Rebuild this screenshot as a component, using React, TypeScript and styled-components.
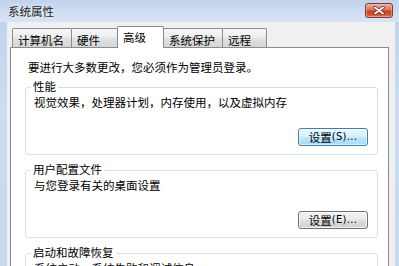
import React from "react";
import styled, { createGlobalStyle } from "styled-components";

const Global = createGlobalStyle`
  html, body { margin: 0; padding: 0; background: #c5d7ed; }
  body { font-family: "Noto Sans CJK SC", "Noto Sans", sans-serif; }
  * { box-sizing: border-box; }
`;

const Window = styled.div`
  width: 399px;
  height: 266px;
  overflow: hidden;
  display: flex;
  flex-direction: column;
  background: linear-gradient(180deg, #bfd3eb 0%, #cddcef 40%, #c8d9ee 100%);
  font-size: 11.5px;
  color: #000;
`;

const TitleBar = styled.div`
  height: 22px;
  flex: none;
  display: flex;
  align-items: center;
  justify-content: space-between;
  padding: 0 6px 0 8px;
  background: linear-gradient(180deg, #c0d3ea 0%, #cfdef1 60%, #d7e4f4 100%);
`;

const Title = styled.div`
  line-height: 14px;
  color: #1a1a1a;
  text-shadow: 0 0 4px rgba(255, 255, 255, 0.9);
`;

const CloseButton = styled.div`
  width: 28px;
  height: 15px;
  margin-top: -1px;
  border: 1px solid #7e3a2e;
  border-radius: 3px;
  display: flex;
  align-items: center;
  justify-content: center;
  background: linear-gradient(180deg, #eab0a0 0%, #d9725a 45%, #c5401f 55%, #cf5a35 85%, #e08a62 100%);
  box-shadow: inset 0 0 0 1px rgba(255, 200, 180, 0.45);
`;

const Client = styled.div`
  flex: 1;
  margin: 0 4px 0 7px;
  padding: 4px 0 0 3px;
  background: #f0f0f0;
  display: flex;
  flex-direction: column;
`;

const TabStrip = styled.div`
  display: flex;
  align-items: flex-end;
  height: 21px;
  margin-left: 2px;
`;

const Tab = styled.div<{ $w: number; $active?: boolean }>`
  width: ${(p) => p.$w}px;
  height: ${(p) => (p.$active ? 22 : 19)}px;
  margin-left: -1px;
  margin-bottom: ${(p) => (p.$active ? -1 : 0)}px;
  padding: ${(p) => (p.$active ? 3 : 4)}px 0 0 5px;
  line-height: 14px;
  white-space: nowrap;
  border: 1px solid #898c95;
  border-bottom: none;
  border-radius: 2px 2px 0 0;
  position: relative;
  z-index: ${(p) => (p.$active ? 2 : 1)};
  background: ${(p) =>
    p.$active
      ? "#ffffff"
      : "linear-gradient(180deg, #f7f7f7 0%, #ededed 45%, #e0e0e0 55%, #d6d6d6 100%)"};
  &:first-child {
    margin-left: 0;
  }
`;

const Panel = styled.div`
  width: 379px;
  flex: 1;
  border: 1px solid #898c95;
  background: #ffffff;
  padding: 12px 10px 0 14px;
  display: flex;
  flex-direction: column;
  gap: 15px;
`;

const Intro = styled.div`
  margin-left: 3px;
  line-height: 14px;
  margin-bottom: -2px;
`;

const Group = styled.div`
  position: relative;
  flex: none;
  border: 1px solid #d5dfe5;
  border-radius: 3px;
  padding: 7px 9px 8px 8px;
  display: flex;
  flex-direction: column;
`;

const GroupLabel = styled.div`
  position: absolute;
  top: -9px;
  left: 5px;
  padding: 0 2px;
  background: #ffffff;
  line-height: 14px;
`;

const Desc = styled.div`
  line-height: 14px;
  white-space: nowrap;
`;

const ButtonRow = styled.div`
  display: flex;
  justify-content: flex-end;
  margin-top: 19px;
`;

const Button = styled.div<{ $default?: boolean }>`
  width: 70px;
  height: 18px;
  border-radius: 3px;
  border: 1px solid ${(p) => (p.$default ? "#3c7fb1" : "#707070")};
  display: flex;
  align-items: center;
  justify-content: center;
  line-height: 16px;
  white-space: nowrap;
  background: ${(p) =>
    p.$default
      ? "linear-gradient(180deg, #eaf6fd 0%, #d9f0fc 45%, #bee6fd 55%, #a7d9f5 100%)"
      : "linear-gradient(180deg, #f2f2f2 0%, #ebebeb 45%, #dddddd 55%, #cfcfcf 100%)"};
  box-shadow: inset 0 0 0 1px
    ${(p) => (p.$default ? "rgba(255,255,255,0.6)" : "rgba(255,255,255,0.7)")};
`;

const Latin = styled.span`
  font-family: "DejaVu Sans", "Noto Sans", sans-serif;
  font-size: 10px;
  letter-spacing: 0.3px;
`;

const CloseIcon = () => (
  <svg width="12" height="9" viewBox="0 0 12 9">
    <path d="M2 1.5 L10 7.5 M10 1.5 L2 7.5" stroke="#5a1d12" strokeWidth="3.2" strokeLinecap="round" />
    <path d="M2 1.5 L10 7.5 M10 1.5 L2 7.5" stroke="#ffffff" strokeWidth="2" strokeLinecap="round" />
  </svg>
);

const tabs = [
  { label: "计算机名", w: 60 },
  { label: "硬件", w: 47 },
  { label: "高级", w: 47, active: true },
  { label: "系统保护", w: 60 },
  { label: "远程", w: 45 },
];

const groups = [
  { title: "性能", desc: "视觉效果，处理器计划，内存使用，以及虚拟内存", key: "S", def: true },
  { title: "用户配置文件", desc: "与您登录有关的桌面设置", key: "E", def: false },
  { title: "启动和故障恢复", desc: "系统启动，系统失败和调试信息", key: "T", def: false },
];

export default function App() {
  return (
    <>
      <Global />
      <Window>
        <TitleBar>
          <Title>系统属性</Title>
          <CloseButton>
            <CloseIcon />
          </CloseButton>
        </TitleBar>
        <Client>
          <TabStrip>
            {tabs.map((t) => (
              <Tab key={t.label} $w={t.w} $active={t.active}>
                {t.label}
              </Tab>
            ))}
          </TabStrip>
          <Panel>
            <Intro>要进行大多数更改，您必须作为管理员登录。</Intro>
            {groups.map((g) => (
              <Group key={g.title}>
                <GroupLabel>{g.title}</GroupLabel>
                <Desc>{g.desc}</Desc>
                <ButtonRow>
                  <Button $default={g.def}>
                    设置<Latin>({g.key})...</Latin>
                  </Button>
                </ButtonRow>
              </Group>
            ))}
          </Panel>
        </Client>
      </Window>
    </>
  );
}
